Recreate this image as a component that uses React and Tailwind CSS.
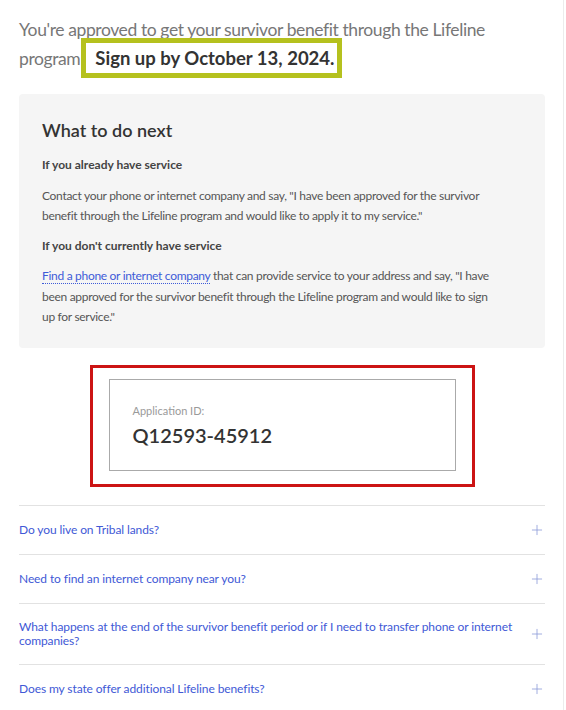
import { Plus } from "lucide-react";

const faqs = [
  "Do you live on Tribal lands?",
  "Need to find an internet company near you?",
  "What happens at the end of the survivor benefit period or if I need to transfer phone or internet companies?",
  "Does my state offer additional Lifeline benefits?",
];

export default function App() {
  return (
    <div
      className="min-h-[710px] bg-white border-r border-[#ececec] w-[564px]"
      style={{ fontFamily: "Lato, 'Noto Sans', sans-serif" }}
    >
      <div className="pl-[19px] pr-[18px] pt-[16px]">
        <p className="text-[17.5px] leading-[28px] tracking-[-0.4px] text-[#777]">
          You're approved to get your survivor benefit through the Lifeline
          program
          <span className="relative ml-[1px] border-[5px] border-[#b5c11e] bg-white pl-[9px] pr-[3px] py-[4px] text-[18.5px] tracking-normal font-bold text-[#333]">
            Sign up by October 13, 2024.
          </span>
        </p>

        <div className="mt-[21px] bg-[#f5f5f5] rounded-sm px-[23px] pt-[24px] pb-[20px]">
          <h2 className="text-[18px] font-semibold text-[#333] leading-[24px]">
            What to do next
          </h2>
          <h3 className="mt-[14px] text-[12px] font-bold text-[#444]">
            If you already have service
          </h3>
          <p className="mt-[12px] max-w-[452px] text-[12px] tracking-[-0.3px] leading-[20px] text-[#555]">
            Contact your phone or internet company and say, "I have been
            approved for the survivor benefit through the Lifeline program and
            would like to apply it to my service."
          </p>
          <h3 className="mt-[11px] text-[12px] font-bold text-[#444]">
            If you don't currently have service
          </h3>
          <p className="mt-[11px] max-w-[452px] text-[12px] tracking-[-0.3px] leading-[20.5px] text-[#555]">
            <a
              href="#"
              className="text-[#3e5bd8] border-b border-dotted border-[#3e5bd8]"
            >
              Find a phone or internet company
            </a>{" "}
            that can provide service to your address and say, "I have been
            approved for the survivor benefit through the Lifeline program and
            would like to sign up for service."
          </p>
        </div>

        <div className="mt-[17px] flex justify-center">
          <div className="border-[3px] border-[#cc1414] w-[385px] px-[16px] pt-[11px] pb-[13px]">
            <div className="border border-[#aaa] px-[23px] pt-[23px] pb-[20px]">
              <div className="text-[11px] text-[#9a9a9a]">Application ID:</div>
              <div className="mt-[1px] text-[20px] font-semibold text-[#333]">
                Q12593-45912
              </div>
            </div>
          </div>
        </div>

        <div className="mt-[18px] border-t border-[#e2e2e2]">
          {faqs.map((q) => (
            <div
              key={q}
              className="flex items-center justify-between gap-3 border-b border-[#e2e2e2] py-[16px]"
            >
              <span className="text-[12px] leading-[14px] tracking-[-0.1px] text-[#4159d6]">
                {q}
              </span>
              <Plus
                className="w-[16px] h-[16px] text-[#8a9ad8] shrink-0"
                strokeWidth={1.2}
              />
            </div>
          ))}
        </div>
      </div>
    </div>
  );
}
